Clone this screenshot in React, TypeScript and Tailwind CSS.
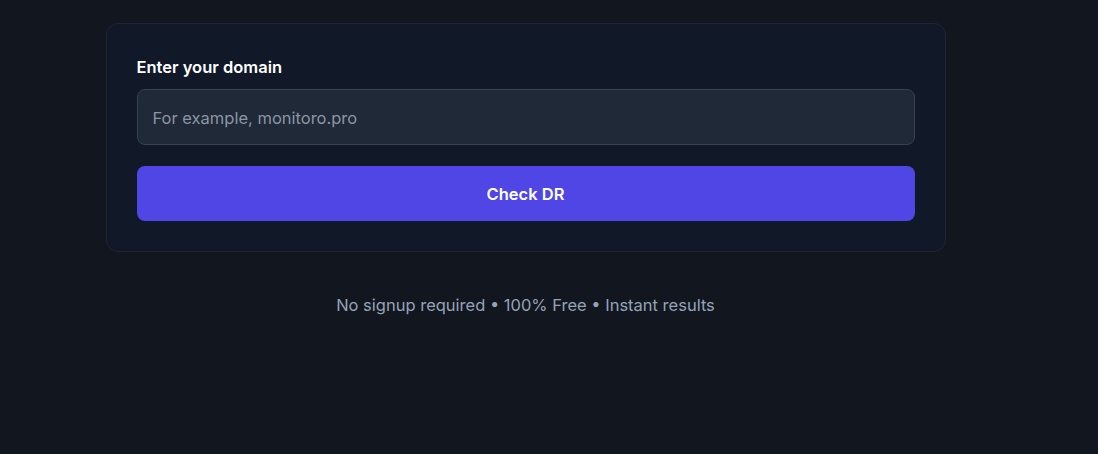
export default function App() {
  return (
    <div
      className="min-h-[454px] w-full bg-[#12161f] pt-[23px]"
      style={{ fontFamily: "Inter, 'Noto Sans', sans-serif" }}
    >
      <div className="flex w-[1051px] flex-col items-center">
        <div className="w-[840px] rounded-xl border border-[#1f2533] bg-[#111827] p-[30px]">
          <label className="mb-[10px] block pt-px text-[16.5px] font-semibold leading-6 text-white">
            Enter your domain
          </label>
          <input
            type="text"
            placeholder="For example, monitoro.pro"
            className="h-[56px] w-full rounded-lg border border-[#374151] bg-[#1f2937] px-[15px] pt-px text-[16.5px] text-white placeholder:text-[#8b95a5] outline-none"
          />
          <button className="mt-[21px] h-[55px] w-full rounded-lg bg-[#4f46e5] pt-[2px] text-[16.5px] font-semibold text-white">
            Check DR
          </button>
        </div>
        <p className="mt-[41px] text-[16.5px] text-[#94a3b8]">
          No signup required • 100% Free • Instant results
        </p>
      </div>
    </div>
  );
}
